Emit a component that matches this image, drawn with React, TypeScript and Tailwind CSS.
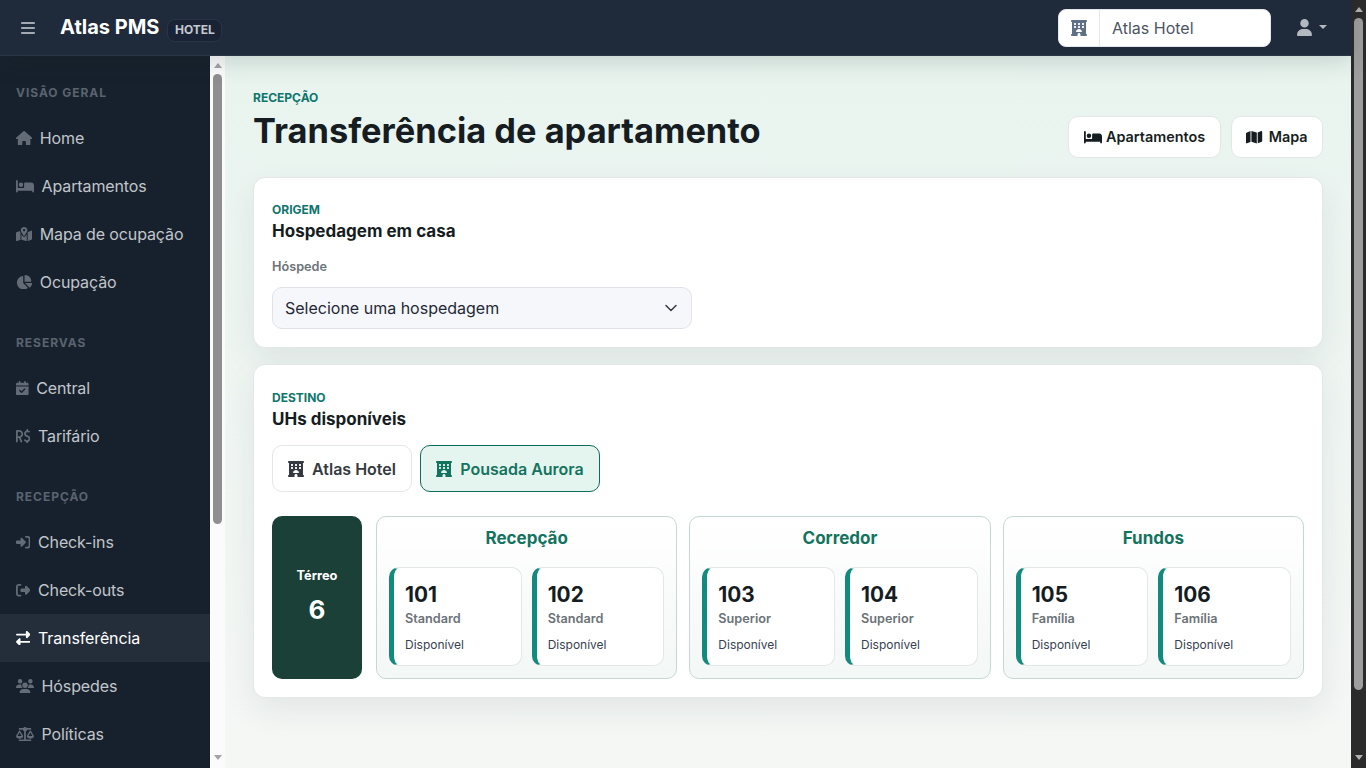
import type { IconType } from 'react-icons'
import {
  FaBars,
  FaBed,
  FaBrazilianRealSign,
  FaCalendarCheck,
  FaChartPie,
  FaHotel,
  FaHouse,
  FaMap,
  FaMapLocationDot,
  FaRightFromBracket,
  FaRightLeft,
  FaRightToBracket,
  FaScaleBalanced,
  FaUser,
  FaUsers,
} from 'react-icons/fa6'
import { ChevronDown } from 'lucide-react'

type NavItem = { label: string; icon: IconType; width: string; active?: boolean }

const navGroups: { title: string; items: NavItem[] }[] = [
  {
    title: 'Visão geral',
    items: [
      { label: 'Home', icon: FaHouse, width: 'w-[16.2px]' },
      { label: 'Apartamentos', icon: FaBed, width: 'w-[18px]' },
      { label: 'Mapa de ocupação', icon: FaMapLocationDot, width: 'w-[16.2px]' },
      { label: 'Ocupação', icon: FaChartPie, width: 'w-[16.2px]' },
    ],
  },
  {
    title: 'Reservas',
    items: [
      { label: 'Central', icon: FaCalendarCheck, width: 'w-[12.6px]' },
      { label: 'Tarifário', icon: FaBrazilianRealSign, width: 'w-[14.4px]' },
    ],
  },
  {
    title: 'Recepção',
    items: [
      { label: 'Check-ins', icon: FaRightToBracket, width: 'w-[14.4px]' },
      { label: 'Check-outs', icon: FaRightFromBracket, width: 'w-[14.4px]' },
      { label: 'Transferência', icon: FaRightLeft, width: 'w-[14.4px]', active: true },
      { label: 'Hóspedes', icon: FaUsers, width: 'w-[18px]' },
      { label: 'Políticas', icon: FaScaleBalanced, width: 'w-[18px]' },
    ],
  },
]

const sections = [
  {
    name: 'Recepção',
    rooms: [
      { number: '101', type: 'Standard' },
      { number: '102', type: 'Standard' },
    ],
  },
  {
    name: 'Corredor',
    rooms: [
      { number: '103', type: 'Superior' },
      { number: '104', type: 'Superior' },
    ],
  },
  {
    name: 'Fundos',
    rooms: [
      { number: '105', type: 'Família' },
      { number: '106', type: 'Família' },
    ],
  },
]

function Header() {
  return (
    <header className="relative z-20 flex h-[56px] shrink-0 items-center justify-between border-b border-[#2c3646] bg-[#1f2a3b] shadow-[0_6px_24px_rgba(15,40,30,0.16)]">
      <div className="flex items-center">
        <FaBars className="ml-[20px] h-4 w-[16px] text-[#a3a9b1]" />
        <span className="mb-[2px] ml-[24px] text-[20px] font-bold text-white">Atlas PMS</span>
        <span className="mt-[5px] ml-[8px] flex h-[23px] w-[55px] items-center justify-center rounded-lg border border-[#2a3446] bg-[#1a2335] text-[12px] font-bold text-[#c4c9cf]">
          HOTEL
        </span>
      </div>
      <div className="flex items-center">
        <div className="flex h-[38px] w-[213px] items-center overflow-hidden rounded-lg border border-[#e5e7eb] bg-white">
          <div className="flex h-full w-[41px] items-center justify-center border-r border-[#e5e7eb]">
            <FaHotel className="h-4 w-4 text-[#5f6f86]" />
          </div>
          <span className="ml-[12px] text-base text-[#4b5563]">Atlas Hotel</span>
        </div>
        <div className="mr-[24px] ml-[26px] flex items-center gap-[7px] text-[#b4b9c0]">
          <FaUser className="h-[17px] w-[15px]" />
          <div className="mb-[1px] h-0 w-0 border-x-4 border-t-4 border-x-transparent border-t-[#b4b9c0]" />
        </div>
      </div>
    </header>
  )
}

function Scrollbar({ dark, thumb, className }: { dark?: boolean; thumb: string; className: string }) {
  const arrow = dark ? '#b0b0b0' : '#a3a3a3'
  return (
    <div className={`flex w-[15px] shrink-0 flex-col items-center justify-between ${className}`}>
      <div className="flex w-full flex-col items-center">
        <div
          className="h-0 w-0 border-x-[4.5px] border-b-[5px] border-x-transparent"
          style={{ borderBottomColor: arrow }}
        />
        <div className={`mt-[6px] w-[9px] rounded-full ${thumb}`} />
      </div>
      <div
        className="mb-[8px] h-0 w-0 border-x-[4.5px] border-t-[5px] border-x-transparent"
        style={{ borderTopColor: arrow }}
      />
    </div>
  )
}

function Sidebar() {
  return (
    <aside className="flex w-[225px] shrink-0">
      <nav className="w-[210px] overflow-hidden bg-[#17212d] pt-[25px]">
        {navGroups.map((group) => (
          <div key={group.title} className="mb-[25px]">
            <div className="flex h-[24px] items-center px-4 text-[12px] font-bold tracking-[0.08em] text-[#5a636e] uppercase">
              {group.title}
            </div>
            <div className="mt-[9px]">
              {group.items.map((item) => (
                <a
                  key={item.label}
                  className={`flex h-[48px] items-center gap-[7.6px] px-4 text-base tracking-[-0.12px] ${
                    item.active ? 'bg-[#242e3a] text-white' : 'text-[#c1c5ca]'
                  }`}
                >
                  <item.icon
                    className={`h-[14.4px] shrink-0 ${item.width} ${item.active ? 'text-white' : 'text-[#626b76]'}`}
                  />
                  {item.label}
                </a>
              ))}
            </div>
          </div>
        ))}
      </nav>
      <Scrollbar className="bg-[#fbfbfb] pt-[7px]" thumb="h-[450px] bg-[#8f8f8f]" />
    </aside>
  )
}

function Eyebrow({ children }: { children: string }) {
  return <div className="text-[12px] leading-[16px] font-bold text-[#0f766e] uppercase">{children}</div>
}

function RoomCard({ number, type }: { number: string; type: string }) {
  return (
    <div className="h-[99px] rounded-[10px] border border-l-[5px] border-[#e3e7e8] border-l-[#128a7d] bg-white pt-[13px] pl-[11px]">
      <div className="text-[20.8px] leading-[28px] font-bold text-[#161d22]">{number}</div>
      <div className="mt-[2px] text-[12.7px] leading-[16px] font-semibold text-[#6b7378]">{type}</div>
      <div className="mt-[10px] text-[12px] leading-[16px] text-[#374151]">Disponível</div>
    </div>
  )
}

function Content() {
  return (
    <main className="min-w-0 flex-1 bg-linear-to-b from-[#e9f4ef] to-[#f5f7f5] px-[28px] pt-[34px]">
      <div className="flex items-end justify-between">
        <div className="mb-[7px]">
          <Eyebrow>Recepção</Eyebrow>
          <h1 className="mt-[4px] text-[34.4px] leading-[41px] font-bold text-[#161d22]">
            Transferência de apartamento
          </h1>
        </div>
        <div className="flex gap-[10px]">
          <button className="flex h-[42px] w-[153px] items-center justify-center gap-[4px] rounded-[10px] border border-[#e3e7e8] bg-white text-[14.4px] font-semibold text-[#161d22]">
            <FaBed className="h-[14.4px] w-[18px]" />
            Apartamentos
          </button>
          <button className="flex h-[42px] w-[92px] items-center justify-center gap-[6px] rounded-[10px] border border-[#e3e7e8] bg-white text-[14.4px] font-semibold text-[#161d22]">
            <FaMap className="h-[14.4px] w-[16.2px]" />
            Mapa
          </button>
        </div>
      </div>

      <section className="mt-[19px] h-[171px] rounded-xl border border-[#e3e7e8] bg-white px-[18px] pt-[24px] shadow-[0_12px_32px_rgba(23,33,45,0.08)]">
        <Eyebrow>Origem</Eyebrow>
        <h2 className="mt-[1px] text-[17px] leading-[24px] font-bold text-[#161d22]">Hospedagem em casa</h2>
        <div className="mt-[16px] text-[12.7px] leading-[16px] font-semibold text-[#6b7378]">Hóspede</div>
        <div className="mt-[12px] flex h-[42px] w-[420px] items-center justify-between rounded-[10px] border border-[#dfe3e8] bg-[#f6f7fb] pr-[10px] pl-[12px] text-base text-[#1f2937]">
          Selecione uma hospedagem
          <ChevronDown className="h-5 w-5 text-[#343a40]" strokeWidth={1.8} />
        </div>
      </section>

      <section className="mt-[16px] h-[334px] rounded-xl border border-[#e3e7e8] bg-white px-[18px] pt-[25px] shadow-[0_12px_32px_rgba(23,33,45,0.08)]">
        <Eyebrow>Destino</Eyebrow>
        <h2 className="mt-[1px] text-[17px] leading-[24px] font-bold text-[#161d22]">UHs disponíveis</h2>
        <div className="mt-[14px] flex gap-[8px]">
          <button className="flex h-[47px] w-[140px] items-center justify-center gap-[8px] rounded-[10px] border border-[#e3e7e8] bg-white text-base font-semibold text-[#343a40]">
            <FaHotel className="h-4 w-4" />
            Atlas Hotel
          </button>
          <button className="flex h-[47px] w-[180px] items-center justify-center gap-[8px] rounded-[10px] border border-[#0f6b5c] bg-[#e4f4ee] text-base font-semibold text-[#14735f]">
            <FaHotel className="h-4 w-4" />
            Pousada Aurora
          </button>
        </div>
        <div className="mt-[24px] flex gap-[14px]">
          <div className="flex h-[163px] w-[90px] shrink-0 flex-col items-center justify-center rounded-[10px] bg-[#1a4038] pb-[2px] text-white">
            <div className="text-[12.8px] leading-[18px] font-bold">Térreo</div>
            <div className="mt-[8px] text-[26px] leading-[34px] font-bold">6</div>
          </div>
          <div className="grid flex-1 grid-cols-3 gap-[12px]">
            {sections.map((section) => (
              <div
                key={section.name}
                className="h-[163px] rounded-[10px] border border-[#c5d8d2] bg-linear-to-b from-white to-[#f3f7f5] px-[12px] pt-[9px]"
              >
                <div className="text-center text-[17px] leading-[24px] font-bold text-[#14735f]">{section.name}</div>
                <div className="mt-[17px] grid grid-cols-2 gap-[10px]">
                  {section.rooms.map((room) => (
                    <RoomCard key={room.number} number={room.number} type={room.type} />
                  ))}
                </div>
              </div>
            ))}
          </div>
        </div>
      </section>
    </main>
  )
}

export default function App() {
  return (
    <div className="flex h-screen overflow-hidden font-['Inter',sans-serif]">
      <div className="flex min-w-0 flex-1 flex-col">
        <Header />
        <div className="flex min-h-0 flex-1">
          <Sidebar />
          <Content />
        </div>
      </div>
      <Scrollbar dark className="bg-[#2b2b2b] pt-[7px]" thumb="h-[672px] bg-[#9e9e9e]" />
    </div>
  )
}
